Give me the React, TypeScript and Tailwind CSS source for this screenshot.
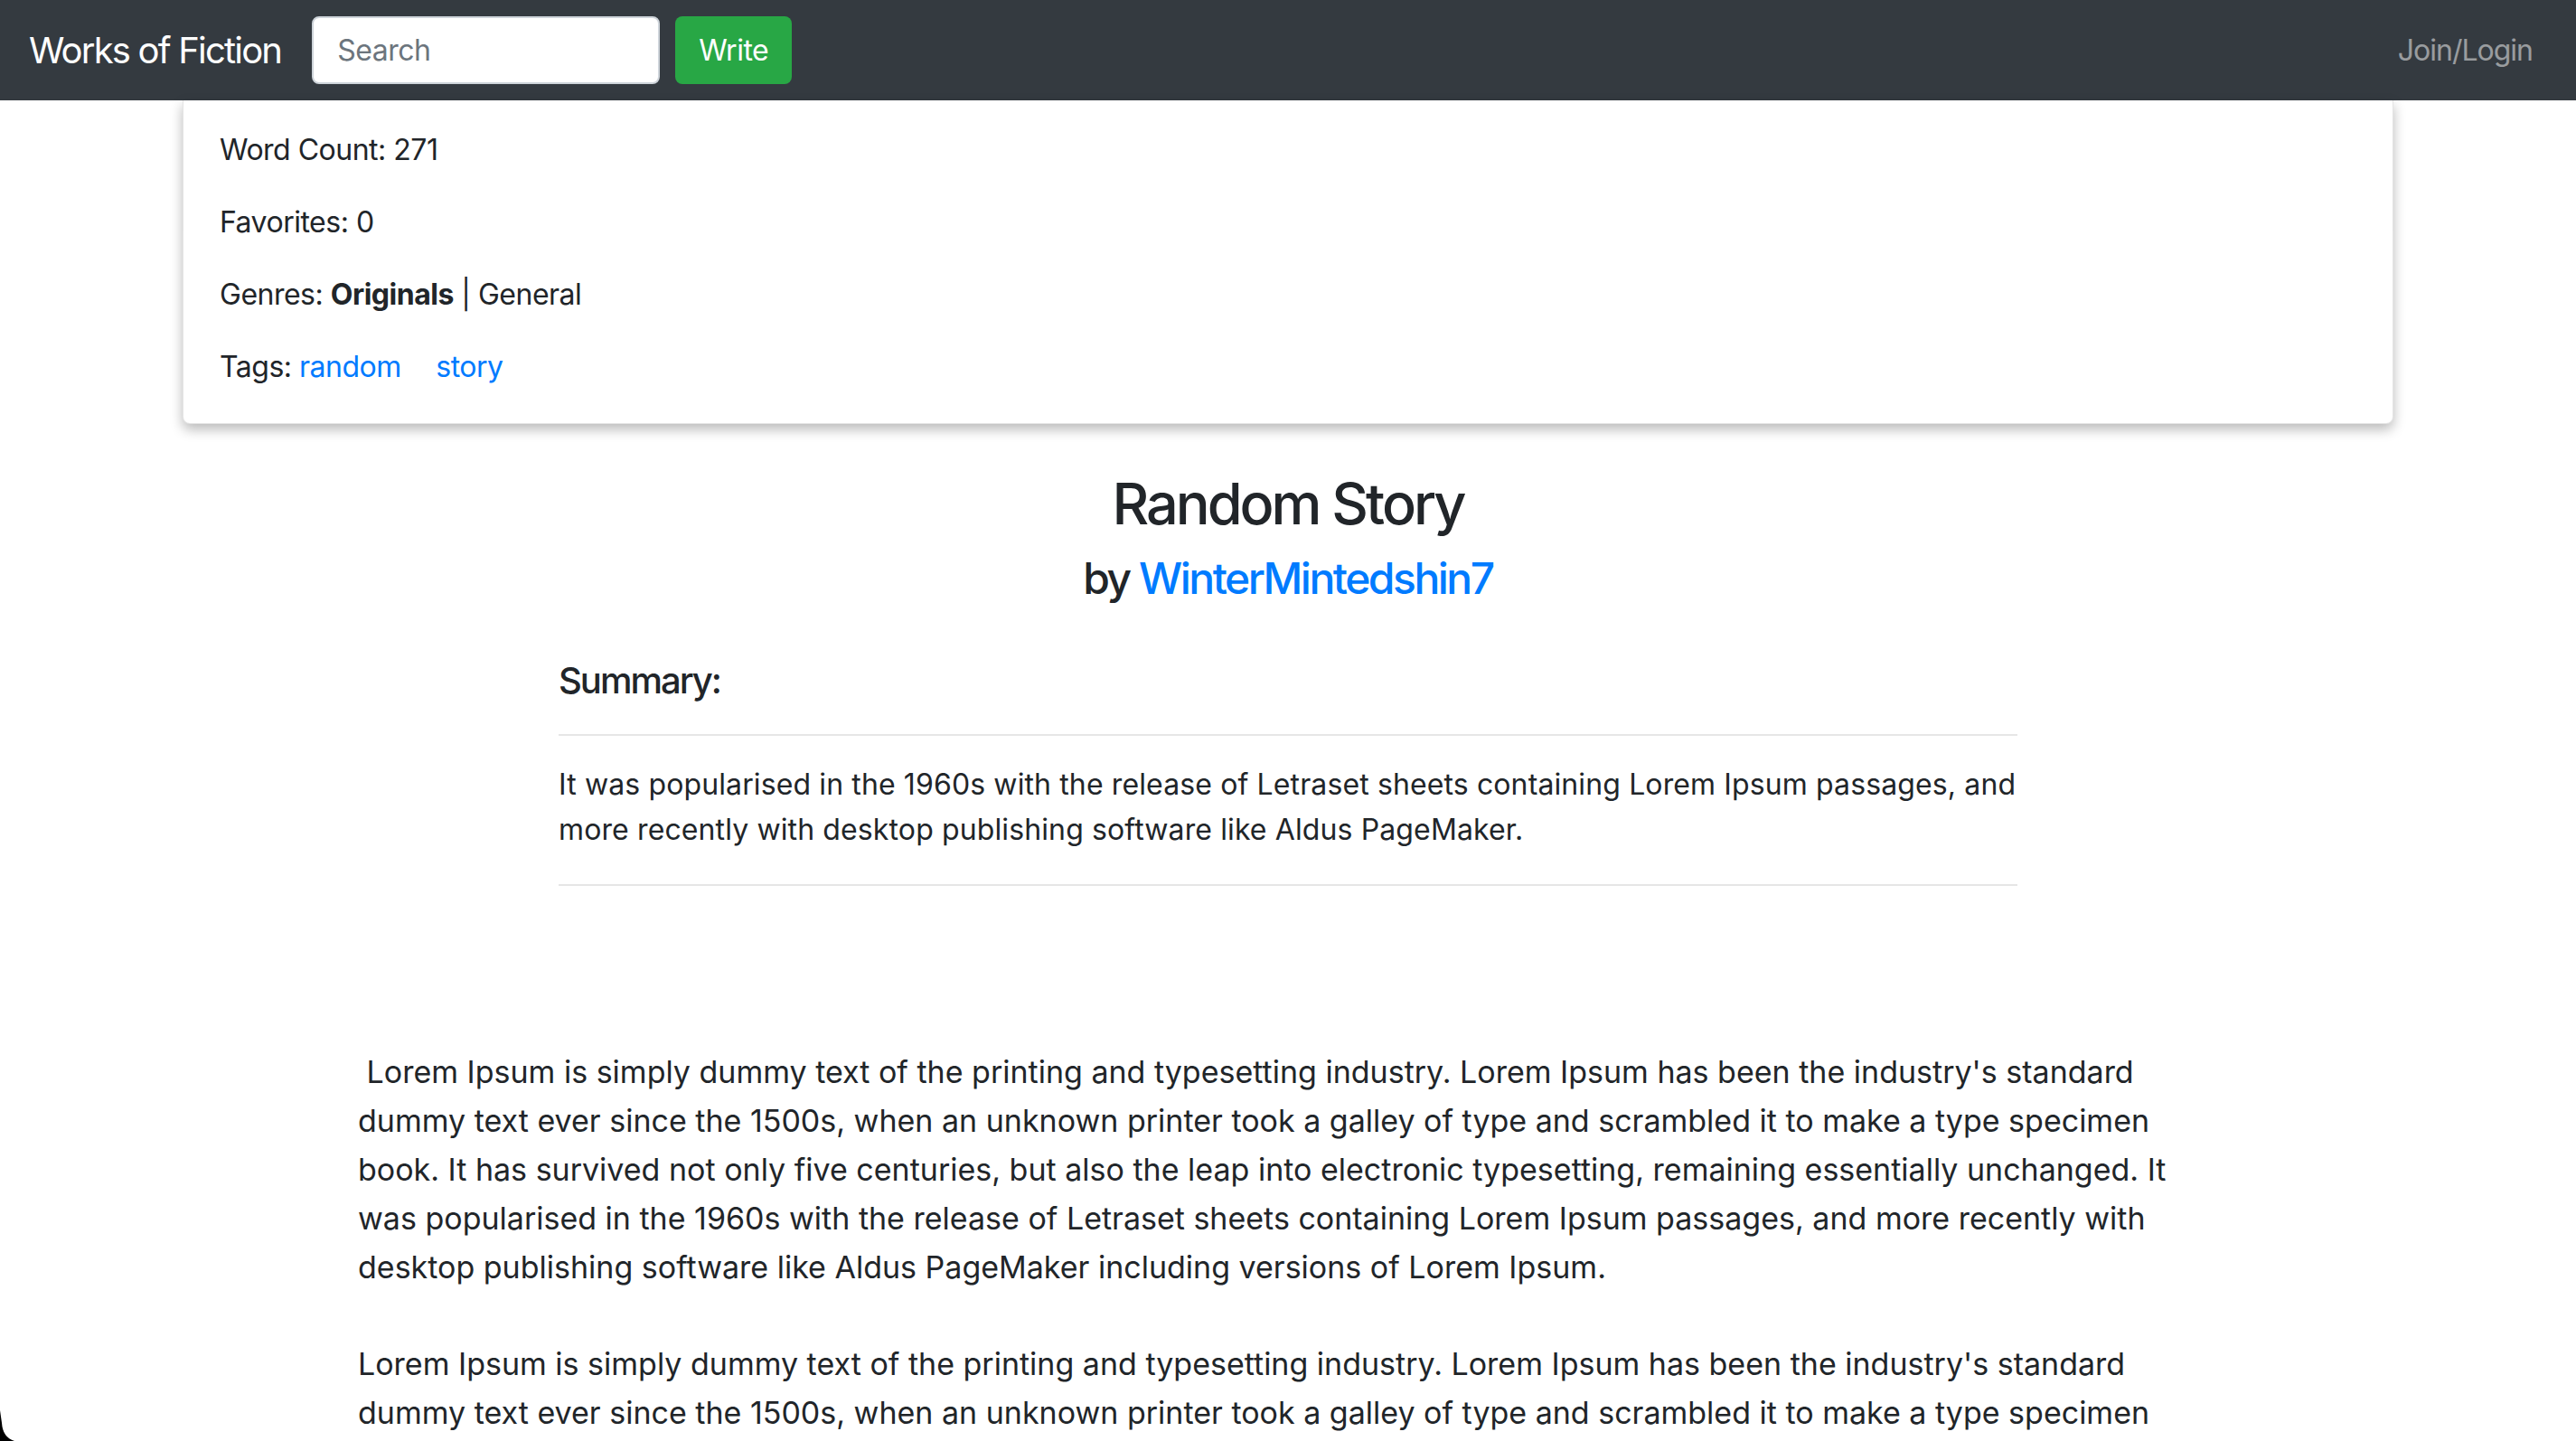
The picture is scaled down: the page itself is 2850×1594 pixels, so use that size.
const lorem =
  "Lorem Ipsum is simply dummy text of the printing and typesetting industry. Lorem Ipsum has been the industry's standard dummy text ever since the 1500s, when an unknown printer took a galley of type and scrambled it to make a type specimen book. It has survived not only five centuries, but also the leap into electronic typesetting, remaining essentially unchanged. It was popularised in the 1960s with the release of Letraset sheets containing Lorem Ipsum passages, and more recently with desktop publishing software like Aldus PageMaker including versions of Lorem Ipsum."

function Navbar() {
  return (
    <nav className="flex h-[111px] items-center bg-[#343a40] px-[32px]">
      <a className="mr-[34px] text-[40px] leading-[60px] tracking-[-1.8px] text-white">Works of Fiction</a>
      <input
        placeholder="Search"
        className="h-[75px] w-[385px] rounded-[8px] border-2 border-[#ced4da] bg-white px-[26px] text-[32px] tracking-[-0.5px] text-[#495057] outline-none placeholder:text-[#6c757d]"
      />
      <button className="ml-[17px] h-[75px] rounded-[8px] bg-[#28a745] px-[26px] text-[32px] tracking-[-0.5px] text-white">
        Write
      </button>
      <a className="ml-auto px-[16px] text-[32px] tracking-[-1px] text-white/50">Join/Login</a>
    </nav>
  )
}

function InfoCard() {
  return (
    <div className="mx-[202px] rounded-b-[8px] border border-t-0 border-black/10 bg-white px-[40px] pt-[31px] pb-[38px] tracking-[-0.5px] shadow-[0_6px_14px_rgba(0,0,0,0.28)]">
      <p className="mb-[32px] leading-[48px]">Word Count: 271</p>
      <p className="mb-[32px] leading-[48px]">Favorites: 0</p>
      <p className="mb-[32px] leading-[48px]">
        Genres: <b className="font-bold">Originals</b> | General
      </p>
      <p className="leading-[48px]">
        Tags: <a className="mr-[30px] text-[#007bff]">random</a>{" "}
        <a className="text-[#007bff]">story</a>
      </p>
    </div>
  )
}

export default function App() {
  return (
    <div className="min-h-screen bg-white font-['Inter','Liberation_Sans',sans-serif] text-[32px] text-[#212529]">
      <Navbar />
      <InfoCard />

      <div className="flex flex-col items-center">
        <h2 className="mt-[50px] text-[63px] font-medium leading-[77px] tracking-[-3px]">Random Story</h2>
        <h4 className="mt-[15px] text-[48px] font-medium leading-[58px] tracking-[-2.5px]">
          by <a className="text-[#007bff]">WinterMintedshin7</a>
        </h4>
      </div>

      <div className="mx-auto mt-[60px] w-[1614px]">
        <h5 className="text-[40px] font-medium leading-[48px] tracking-[-2px]">Summary:</h5>
        <hr className="mt-[35px] border-t-2 border-[#e6e6e6]" />
        <p className="mt-[29px] leading-[50px] tracking-[0.12px]">
          It was popularised in the 1960s with the release of Letraset sheets containing Lorem Ipsum
          passages, and more recently with desktop publishing software like Aldus PageMaker.
        </p>
        <hr className="mt-[35px] border-t-2 border-[#e6e6e6]" />
      </div>

      <div className="mx-auto mt-[179px] w-[2058px] pb-[60px] text-[34px]">
        <p className="mb-[53px] leading-[54px]">{"\u00a0" + lorem}</p>
        <p className="mb-[53px] leading-[54px]">{lorem}</p>
        <p className="leading-[54px]">{lorem}</p>
      </div>

      <svg className="fixed bottom-0 left-0" width="16" height="34" viewBox="0 0 16 34">
        <path d="M0 0 L0 34 L16 34 Q3 30 2 14 Z" fill="#000" />
      </svg>
    </div>
  )
}
